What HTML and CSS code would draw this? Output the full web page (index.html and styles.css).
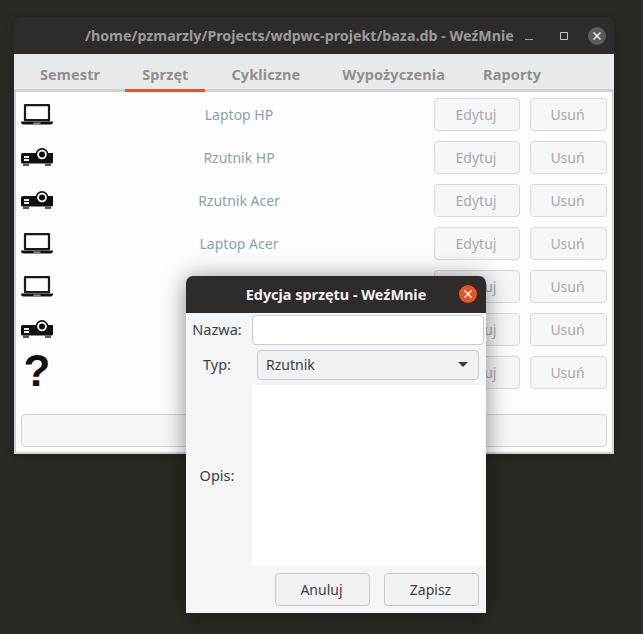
FILE: index.html
```html
<!DOCTYPE html>
<html lang="pl">

<head>
    <meta charset="UTF-8">
    <title>WeźMnie</title>
    <link rel="stylesheet" href="styles.css">
</head>

<body>
    <svg class="defs" width="0" height="0">
        <symbol id="laptop" viewBox="0 0 32 21">
            <path d="M4 1.200h24v15H4z" fill="none" stroke="#1a1a1a" stroke-width="2.200" stroke-linejoin="round" />
            <path d="M0 17.500h32c0 1.800-.8 3-2.500 3h-27C.8 20.500 0 19.300 0 17.500z" fill="#111" />
            <path d="M12.500 18.500h7v2h-7z" fill="#8a8a8a" />
        </symbol>
        <symbol id="projector" viewBox="0 0 32 19">
            <path d="M2 5h30v9q0 1.500-1.500 1.500H1.500Q0 15.500 0 14V7q0-2 2-2z" fill="#111" />
            <circle cx="21" cy="6.500" r="6.500" fill="#111" />
            <circle cx="21" cy="6.500" r="4.800" fill="#fff" />
            <circle cx="21" cy="6.500" r="3" fill="#111" />
            <path d="M3 8h5v2H3zM3 11h5v2H3z" fill="#eee" />
            <path d="M2 15.500h6V18H2zM24 15.500h6V18h-6z" fill="#555" />
        </symbol>
    </svg>

    <div class="window main">
        <div class="titlebar">
            <span class="title">/home/pzmarzly/Projects/wdpwc-projekt/baza.db - WeźMnie</span>
            <div class="controls">
                <svg width="10" height="10" viewBox="0 0 10 10"><path d="M1 8.500h8" stroke="#a0a0a0" stroke-width="1" /></svg>
                <svg width="10" height="10" viewBox="0 0 10 10"><path d="M1.500 1.500h7v7h-7z" fill="none" stroke="#c8c8c8" stroke-width="1" /></svg>
                <span class="close grey"><svg width="10" height="10" viewBox="0 0 10 10"><path d="M1.500 1.500l7 7M8.500 1.500l-7 7" stroke="#fff" stroke-width="1.400" /></svg></span>
            </div>
        </div>
        <div class="tabs">
            <div class="tab">Semestr</div>
            <div class="tab active">Sprzęt</div>
            <div class="tab">Cykliczne</div>
            <div class="tab">Wypożyczenia</div>
            <div class="tab">Raporty</div>
        </div>
        <div class="content">
            <div class="row">
                <svg class="icon"><use href="#laptop" /></svg>
                <span class="label">Laptop HP</span>
                <button class="btn edit">Edytuj</button>
                <button class="btn remove">Usuń</button>
            </div>
            <div class="row">
                <svg class="icon"><use href="#projector" /></svg>
                <span class="label">Rzutnik HP</span>
                <button class="btn edit">Edytuj</button>
                <button class="btn remove">Usuń</button>
            </div>
            <div class="row">
                <svg class="icon"><use href="#projector" /></svg>
                <span class="label">Rzutnik Acer</span>
                <button class="btn edit">Edytuj</button>
                <button class="btn remove">Usuń</button>
            </div>
            <div class="row">
                <svg class="icon"><use href="#laptop" /></svg>
                <span class="label">Laptop Acer</span>
                <button class="btn edit">Edytuj</button>
                <button class="btn remove">Usuń</button>
            </div>
            <div class="row">
                <svg class="icon"><use href="#laptop" /></svg>
                <span class="label"></span>
                <button class="btn edit">Edytuj</button>
                <button class="btn remove">Usuń</button>
            </div>
            <div class="row">
                <svg class="icon"><use href="#projector" /></svg>
                <span class="label"></span>
                <button class="btn edit">Edytuj</button>
                <button class="btn remove">Usuń</button>
            </div>
            <div class="row">
                <span class="icon question">?</span>
                <span class="label"></span>
                <button class="btn edit">Edytuj</button>
                <button class="btn remove">Usuń</button>
            </div>
            <div class="add-bar"></div>
        </div>
    </div>

    <div class="window dialog">
        <div class="titlebar">
            <span class="title">Edycja sprzętu - WeźMnie</span>
            <span class="close orange"><svg width="10" height="10" viewBox="0 0 10 10"><path d="M1.500 1.500l7 7M8.500 1.500l-7 7" stroke="#fff" stroke-width="1.400" /></svg></span>
        </div>
        <div class="form">
            <label class="name-label">Nazwa:</label>
            <input class="name-input" type="text">
            <label class="type-label">Typ:</label>
            <div class="combo"><span>Rzutnik</span><i class="arrow"></i></div>
            <label class="desc-label">Opis:</label>
            <div class="desc"></div>
        </div>
        <div class="actions">
            <button class="dlg-btn">Anuluj</button>
            <button class="dlg-btn">Zapisz</button>
        </div>
    </div>
</body>

</html>
```

FILE: styles.css
```css
body {
    margin: 0;
    height: 634px;
    overflow: hidden;
    background: #2a2a24;
    font-family: "Noto Sans", "Open Sans", sans-serif;
    font-size: 14px;
    color: #3d3d3d;
}

.defs {
    position: absolute;
}

.window {
    position: absolute;
    display: flex;
    flex-direction: column;
    border-radius: 7px 7px 0 0;
    overflow: hidden;
}

.main {
    left: 14px;
    top: 17px;
    width: 600px;
    height: 437px;
    box-shadow: 0 2px 10px rgba(0, 0, 0, 0.25);
}

.dialog {
    left: 186px;
    top: 276px;
    width: 300px;
    height: 337px;
    overflow: visible;
    background: #f4f5f7;
    box-shadow: 0 2px 24px rgba(0, 0, 0, 0.45);
}

.titlebar {
    flex: none;
    height: 37px;
    display: flex;
    align-items: center;
    background: #2e2b2b;
    font-weight: 700;
    white-space: nowrap;
    border-radius: 7px 7px 0 0;
}

.main .titlebar {
    padding-left: 71px;
    color: #9b9b9b;
    font-size: 14.250px;
}

.controls {
    display: flex;
    align-items: center;
    margin-left: 10px;
    gap: 25px;
}

.close {
    display: flex;
    align-items: center;
    justify-content: center;
    width: 18px;
    height: 18px;
    border-radius: 50%;
}

.close.grey {
    background: #5c5c5c;
    margin-left: -6px;
}

.close.orange {
    background: #e95420;
    position: absolute;
    right: 9px;
    top: 9px;
}

.dialog .titlebar {
    justify-content: center;
    color: #f2f2f2;
    font-size: 14.400px;
}

.tabs {
    flex: none;
    height: 38px;
    box-sizing: border-box;
    display: flex;
    padding-left: 9px;
    background: #e8e9eb;
    border-bottom: 3px solid #cfd2d5;
    font-weight: 700;
    font-size: 14.500px;
    letter-spacing: 0.1px;
    color: #8f8f8f;
}

.tab {
    padding: 10px 17px 0;
    height: 38px;
    box-sizing: border-box;
    margin-right: 8px;
    white-space: nowrap;
}

.tab:nth-child(2) {
    margin-right: 9px;
}

.tab:nth-child(4) {
    margin-right: 4px;
}

.tab.active {
    border-bottom: 3px solid #e95420;
}

.content {
    flex: 1;
    display: flex;
    flex-direction: column;
    gap: 10px;
    padding: 6px 5px 5px;
    background: #fdfdfd;
    border-left: 2px solid #d0d3d6;
    border-right: 2px solid #d0d3d6;
    border-bottom: 2px solid #d0d3d6;
}

.row {
    display: flex;
    align-items: center;
    height: 33px;
    flex: none;
}

.icon {
    width: 32px;
    height: 21px;
    flex: none;
}

.question {
    display: flex;
    justify-content: center;
    align-items: center;
    height: 29px;
    margin-bottom: 4px;
    font-family: "Liberation Sans", sans-serif;
    font-weight: 700;
    font-size: 44px;
    color: #111;
}

.label {
    flex: 1;
    text-align: center;
    color: #86a3b6;
    padding-right: 9px;
}

.btn {
    height: 33px;
    border: 1px solid #d5d8dc;
    border-radius: 4px;
    background: #f5f6f7;
    color: #a8aaad;
    font: inherit;
    padding: 0 2px 0 0;
}

.edit {
    width: 86px;
    margin-right: 10px;
}

.remove {
    width: 77px;
}

.add-bar {
    flex: none;
    height: 33px;
    box-sizing: border-box;
    margin-top: 15px;
    border: 1px solid #d0d3d6;
    border-radius: 4px;
    background: #f5f6f7;
}

.form {
    display: grid;
    grid-template-columns: 66px 234px;
    grid-template-rows: 30px 30px 181px;
    row-gap: 5px;
    padding-top: 2px;
    align-items: center;
}

.form label {
    text-align: center;
    font-size: 14.500px;
    padding-right: 4px;
    padding-bottom: 2px;
}

.name-input {
    width: 232px;
    height: 30px;
    box-sizing: border-box;
    border: 1px solid #c8ccd0;
    border-radius: 4px;
    background: #fff;
    padding: 0;
    margin: 0;
}

.combo {
    width: 222px;
    height: 30px;
    box-sizing: border-box;
    margin-left: 5px;
    display: flex;
    align-items: center;
    justify-content: space-between;
    padding: 0 10px 1px 8px;
    border: 1px solid #c8ccd0;
    border-radius: 4px;
    background: #f0f1f3;
}

.arrow {
    width: 0;
    height: 0;
    border-left: 5px solid transparent;
    border-right: 5px solid transparent;
    border-top: 5px solid #3d3d3d;
}

.desc {
    width: 233px;
    height: 181px;
    background: #fff;
}

.actions {
    display: flex;
    justify-content: flex-end;
    gap: 14px;
    padding: 7px 7px 0 0;
}

.dlg-btn {
    width: 95px;
    height: 33px;
    border: 1px solid #c4c7cb;
    border-radius: 4px;
    background: #f1f2f4;
    color: #3d3d3d;
    font: inherit;
    padding: 0 2px 0 0;
}
```
